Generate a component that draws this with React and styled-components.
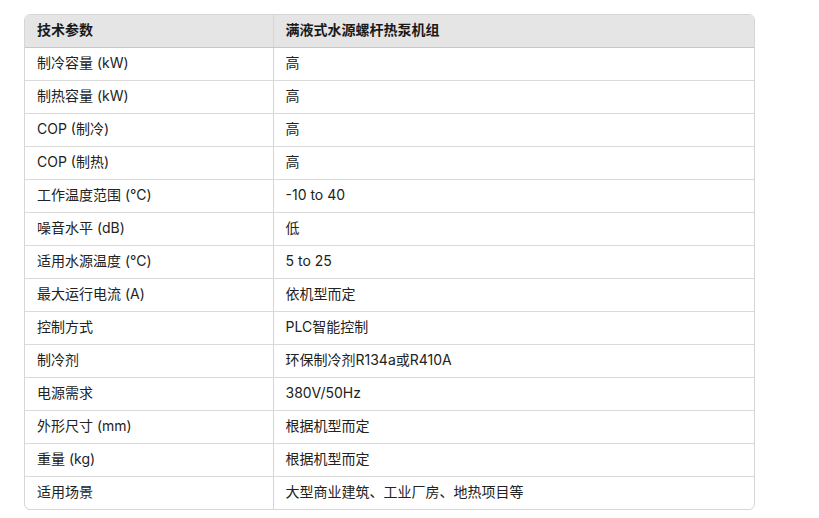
import React from "react";
import styled, { createGlobalStyle } from "styled-components";

const Global = createGlobalStyle`
  html, body { margin: 0; padding: 0; background: #fff; }
  body { font-family: Inter, "Noto Sans CJK SC", sans-serif; color: #1f1f1f; }
`;

const Page = styled.div`
  padding: 14px 64px 9px 24px;
`;

const Frame = styled.div`
  border: 1px solid #d6d6d6;
  border-radius: 6px;
  overflow: hidden;
  width: 729px;
`;

const Table = styled.table`
  width: 100%;
  border-collapse: collapse;
  table-layout: fixed;
  font-size: 14px;
`;

const HeadCell = styled.th`
  background: #e5e5e5;
  text-align: left;
  font-weight: 700;
  height: 32px;
  padding: 0 12px 1px;
  border-bottom: 1px solid #c8c8c8;
  border-left: ${(p) => (p.$first ? "none" : "1px solid #d6d6d6")};
  width: ${(p) => (p.$first ? "248px" : "auto")};
  box-sizing: border-box;
  line-height: 20px;
  color: #1a1a1a;
`;

const Cell = styled.td`
  height: 33px;
  padding: 0 12px 1px;
  border-top: ${(p) => (p.$top ? "none" : "1px solid #dadada")};
  border-left: ${(p) => (p.$first ? "none" : "1px solid #d6d6d6")};
  box-sizing: border-box;
  line-height: 20px;
  color: #222;
`;

const rows = [
  ["制冷容量 (kW)", "高"],
  ["制热容量 (kW)", "高"],
  ["COP (制冷)", "高"],
  ["COP (制热)", "高"],
  ["工作温度范围 (℃)", "-10 to 40"],
  ["噪音水平 (dB)", "低"],
  ["适用水源温度 (℃)", "5 to 25"],
  ["最大运行电流 (A)", "依机型而定"],
  ["控制方式", "PLC智能控制"],
  ["制冷剂", "环保制冷剂R134a或R410A"],
  ["电源需求", "380V/50Hz"],
  ["外形尺寸 (mm)", "根据机型而定"],
  ["重量 (kg)", "根据机型而定"],
  ["适用场景", "大型商业建筑、工业厂房、地热项目等"],
];

export default function App() {
  return (
    <>
      <Global />
      <Page>
        <Frame>
          <Table>
            <thead>
              <tr>
                <HeadCell $first>技术参数</HeadCell>
                <HeadCell>满液式水源螺杆热泵机组</HeadCell>
              </tr>
            </thead>
            <tbody>
              {rows.map(([k, v], i) => (
                <tr key={k}>
                  <Cell $first $top={i === 0}>{k}</Cell>
                  <Cell $top={i === 0}>{v}</Cell>
                </tr>
              ))}
            </tbody>
          </Table>
        </Frame>
      </Page>
    </>
  );
}
